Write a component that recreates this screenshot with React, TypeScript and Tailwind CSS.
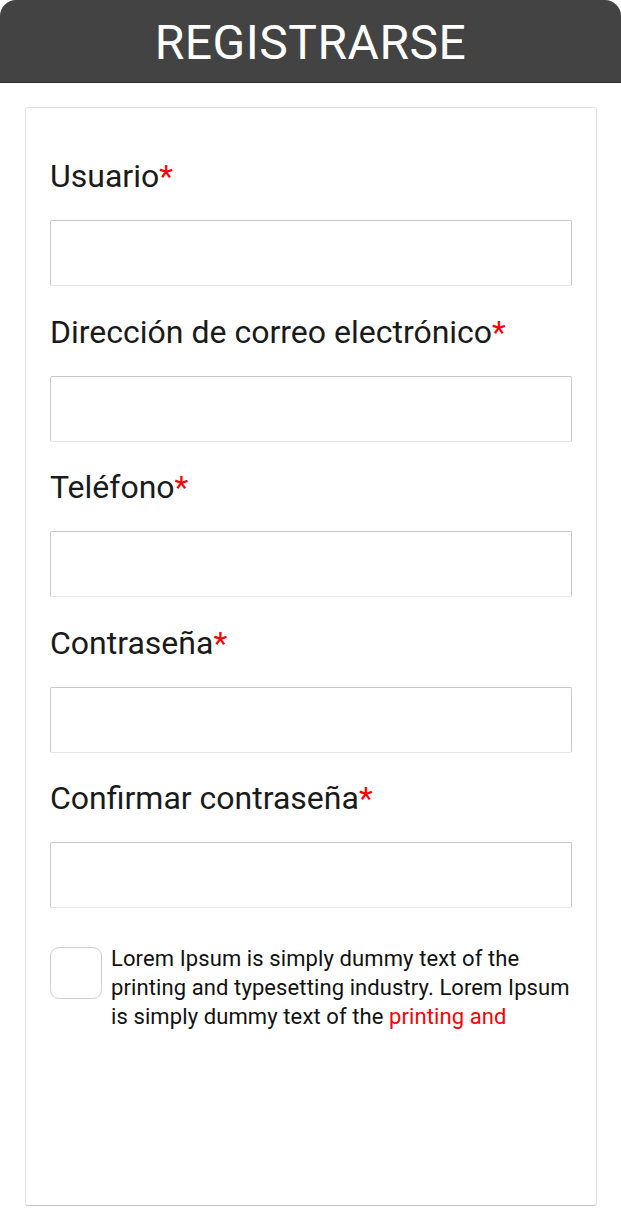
import React from "react";

const fields = [
  "Usuario",
  "Dirección de correo electrónico",
  "Teléfono",
  "Contraseña",
  "Confirmar contraseña",
];

export default function App() {
  return (
    <div className="w-[621px] h-[1229px] bg-white font-['Roboto',sans-serif] overflow-hidden">
      {/* header */}
      <div className="h-[83px] bg-[#434343] rounded-t-[16px] border-b border-[#2e2e2e] flex items-center justify-center">
        <h1 className="mt-[4px] text-white text-[48px] leading-none tracking-[0.5px] font-normal">REGISTRARSE</h1>
      </div>

      {/* form card */}
      <div className="ml-[25px] mr-[24px] mt-[24px] h-[1099px] border border-[#e4e4e4] border-b-[#c4c4c4] rounded-[3px] px-[24px] pt-[50px]">
        {fields.map((label, i) => (
          <div key={label} className={i === 0 ? "" : "mt-[27.5px]"}>
            <div className="text-[32px] leading-[36px] text-[#1a1a1a]">
              {label}
              <span className="text-[#ff0000]">*</span>
            </div>
            <input
              type="text"
              className="mt-[26px] block w-full h-[66px] border border-[#c9c9c9] border-b-[#e6e6e6] rounded-[2px] outline-none bg-white"
            />
          </div>
        ))}

        <div className="mt-[39px] flex items-start gap-[9px]">
          <div className="w-[52px] h-[52px] shrink-0 border border-[#cfcfcf] rounded-[9px] bg-white" />
          <p className="text-[22px] leading-[29px] tracking-[0.1px] text-[#111] -mt-[3px]">
            Lorem Ipsum is simply dummy text of the printing and typesetting industry. Lorem Ipsum is simply dummy text of
            the <span className="text-[#ff0000]">printing and</span>
          </p>
        </div>
      </div>
    </div>
  );
}
